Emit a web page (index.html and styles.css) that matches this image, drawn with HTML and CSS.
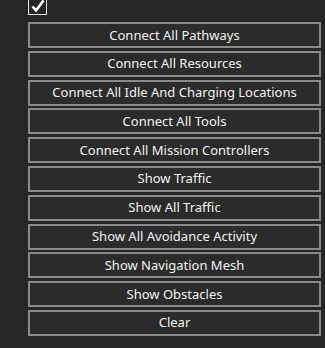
FILE: index.html
```html
<!DOCTYPE html>
<html lang="en">
<head>
    <meta charset="UTF-8">
    <title>Debug Options</title>
    <link rel="stylesheet" href="styles.css">
</head>
<body>
    <div class="panel">
        <div class="check-box">
            <svg width="16" height="16" viewBox="0 0 16 16">
                <path d="M2.5 8.5 L6 12.5 L13.5 2.5" fill="none" stroke="#fff" stroke-width="2.6" stroke-linejoin="miter"/>
            </svg>
        </div>

        <div class="button-list">
            <button class="debug-button">Connect All Pathways</button>
            <button class="debug-button">Connect All Resources</button>
            <button class="debug-button">Connect All Idle And Charging Locations</button>
            <button class="debug-button">Connect All Tools</button>
            <button class="debug-button">Connect All Mission Controllers</button>
            <button class="debug-button">Show Traffic</button>
            <button class="debug-button">Show All Traffic</button>
            <button class="debug-button">Show All Avoidance Activity</button>
            <button class="debug-button">Show Navigation Mesh</button>
            <button class="debug-button">Show Obstacles</button>
            <button class="debug-button">Clear</button>
        </div>
    </div>
</body>
</html>
```

FILE: styles.css
```css
* {
    margin: 0;
    padding: 0;
    box-sizing: border-box;
}

body {
    background-color: #262626;
    color: #f0f0f0;
    font-family: 'Noto Sans', 'Open Sans', sans-serif;
    overflow: hidden;
}

.panel {
    padding: 0 4px 0 28px;
    display: flex;
    flex-direction: column;
}

.check-box {
    width: 19px;
    height: 19px;
    margin-top: -4px;
    border: 1px solid #e6e6e6;
    background-color: #262626;
    display: flex;
    align-items: center;
    justify-content: center;
}

.button-list {
    margin-top: 7px;
    display: flex;
    flex-direction: column;
    gap: 2.8px;
}

.debug-button {
    height: 26px;
    width: 100%;
    background-color: #2b2b2b;
    border: 2px solid #8a8a8a;
    color: #f2f2f2;
    font-family: 'Noto Sans', 'Open Sans', sans-serif;
    font-size: 13px;
    line-height: 1;
    cursor: pointer;
}
```
